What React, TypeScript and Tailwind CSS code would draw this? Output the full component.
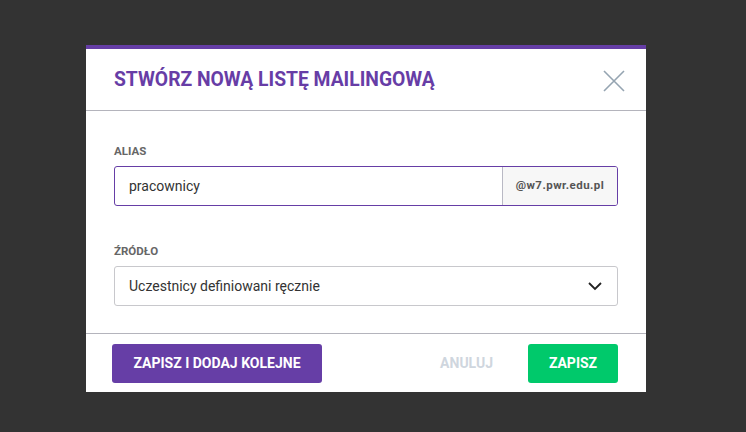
import React from "react";

export default function App() {
  return (
    <div className="w-[746px] h-[432px] bg-[#333333] pt-[45px] pl-[86px]" style={{ fontFamily: "Roboto, 'Noto Sans', sans-serif" }}>
      <div className="w-[560px] bg-white border-t-4 border-[#663ea6]">
        <div className="h-[62px] flex items-center justify-between pl-[28px] pr-[20px] pt-[2px] border-b border-[#b4b4bc]">
          <h1 className="text-[19.3px] font-bold text-[#673da6] uppercase">Stwórz nową listę mailingową</h1>
          <svg width="24" height="24" viewBox="0 0 24 24">
            <path d="M2 2 L22 22 M22 2 L2 22" stroke="#95a4b1" strokeWidth="1.6" fill="none" />
          </svg>
        </div>
        <div className="px-[28px] pt-[32px] pb-[27px]">
          <div className="text-[11.5px] leading-[16px] font-bold text-[#666666] uppercase">Alias</div>
          <div className="mt-[7px] h-[40px] flex border border-[#663ea6] rounded-[3px] overflow-hidden">
            <div className="flex-1 flex items-center pl-[14px] text-[14px] text-[#333333]">pracownicy</div>
            <div className="w-[115px] flex items-center justify-center bg-[#f7f7f7] border-l border-[#b9b9c4] text-[11.5px] tracking-[0.45px] font-bold text-[#555555]">@w7.pwr.edu.pl</div>
          </div>
          <div className="mt-[37px] text-[11.5px] leading-[16px] font-bold text-[#666666] uppercase">Źródło</div>
          <div className="mt-[7px] h-[40px] flex items-center justify-between border border-[#c8c8cc] rounded-[3px] pl-[14px] pr-[14px]">
            <span className="text-[14px] text-[#333333]">Uczestnicy definiowani ręcznie</span>
            <svg width="16" height="16" viewBox="0 0 16 16">
              <path d="M2 5 L8 11 L14 5" stroke="#222222" strokeWidth="1.8" fill="none" />
            </svg>
          </div>
        </div>
        <div className="border-t border-[#b4b4bc] pt-[10px] pb-[9px] pl-[26px] pr-[28px] flex items-center">
          <button className="h-[39px] w-[210px] bg-[#663ea6] rounded-[3px] text-white text-[14px] font-bold uppercase">Zapisz i dodaj kolejne</button>
          <div className="flex-1" />
          <button className="text-[14px] font-bold uppercase text-[#cfd6de] mr-[35px]">Anuluj</button>
          <button className="h-[39px] w-[90px] bg-[#00c96b] rounded-[3px] text-white text-[14px] font-bold uppercase">Zapisz</button>
        </div>
      </div>
    </div>
  );
}
